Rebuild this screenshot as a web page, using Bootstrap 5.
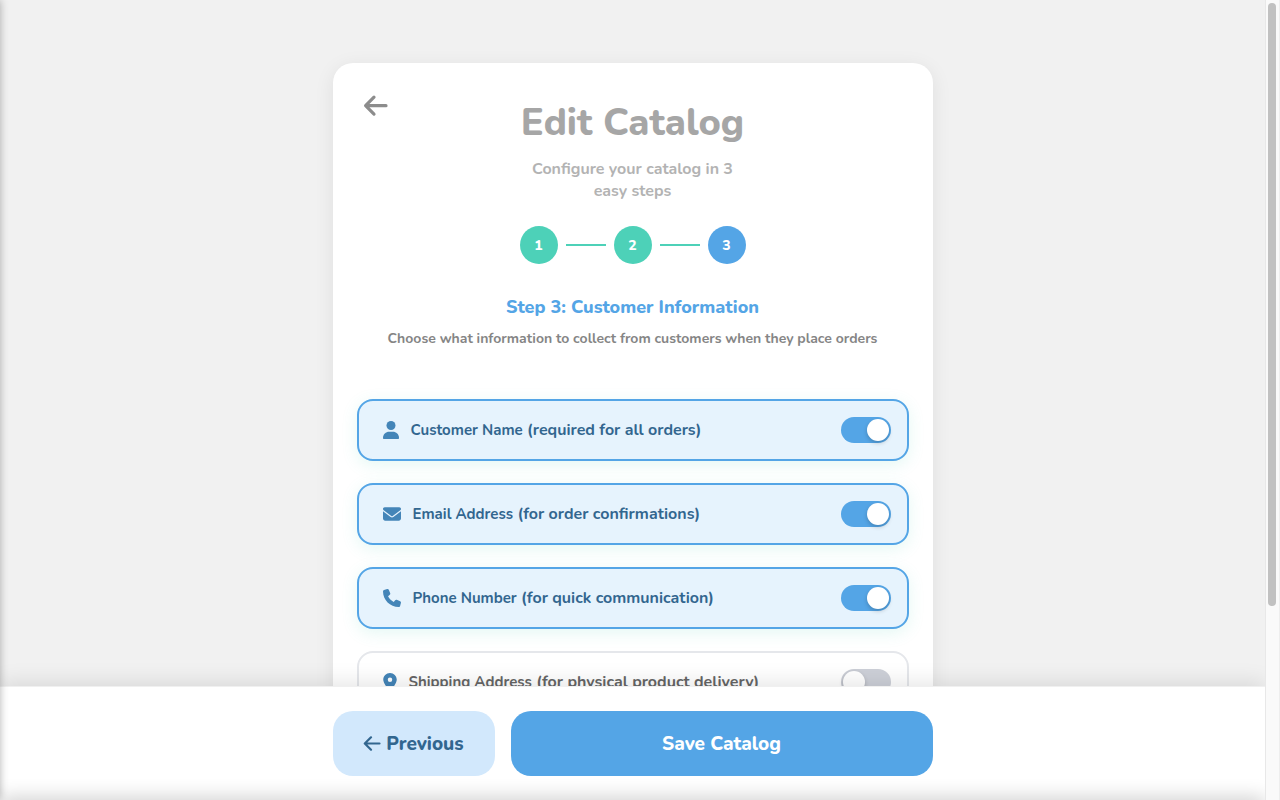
<!DOCTYPE html>
<html lang="en">
<head>
<meta charset="utf-8">
<meta name="viewport" content="width=device-width, initial-scale=1">
<title>Edit Catalog</title>
<link href="https://cdn.jsdelivr.net/npm/bootstrap@5.3.0/dist/css/bootstrap.min.css" rel="stylesheet">
<style>
  :root { --blue: #54a5e6; --navy: #32668f; --mint: #4dd1b8; }
  body { font-family: Nunito, Lato, "Open Sans", sans-serif; background: #f1f1f1; color: #777; }
  .scroll-area { min-height: 0; scrollbar-width: none; }
  .scroll-area::-webkit-scrollbar { display: none; }
  .column { max-width: 600px; }
  .panel { margin-top: 63px; padding: 40px 24px 48px; border-radius: 20px; background: #fff; box-shadow: 0 4px 20px rgba(0,0,0,.08); }
  .back { top: 28px; left: 28px; color: #8c8c8c; line-height: 0; }
  h1 { font-size: 38px; line-height: 40px; font-weight: 800; color: #a6a6a6; }
  .intro { max-width: 226px; margin-top: 15px; font-size: 16px; line-height: 22px; font-weight: 700; color: #b3b3b3; }
  .step { width: 38px; height: 38px; background: var(--mint); color: #fff; font-size: 14px; font-weight: 800; }
  .step.current { background: var(--blue); }
  .steps { margin-top: 24px; }
  .step-line { width: 40px; height: 2px; background: var(--mint); }
  h2 { margin-top: 32px; font-size: 18px; line-height: 22px; font-weight: 800; color: var(--blue); }
  .hint { margin-top: 10px; font-size: 14px; line-height: 22px; font-weight: 700; color: #858585; }
  .options { margin-top: 49px; gap: 22px; }
  .option { height: 62px; padding: 0 16px 0 24px; border: 2px solid #e5e7eb; border-radius: 16px; gap: 12px; color: #666; font-size: 16px; font-weight: 700; cursor: pointer; }
  .option:has(:checked) { border-color: var(--blue); background: #e6f3fd; color: var(--navy); box-shadow: 0 4px 16px rgba(77,209,184,.15); }
  .option svg { fill: #4485b8; flex: none; }
  .option-name { font-size: 15px; }
  .toggle { appearance: none; position: relative; flex: none; width: 50px; height: 26px; border-radius: 13px; background: #cdd0d8; cursor: pointer; }
  .toggle::before { content: ""; position: absolute; top: 2px; left: 2px; width: 22px; height: 22px; border-radius: 50%; background: #fff; box-shadow: 0 2px 4px rgba(0,0,0,.2); }
  .toggle:checked { background: var(--blue); }
  .toggle:checked::before { left: 26px; }
  .actions { z-index: 2; padding: 24px 0; border-top: 1px solid #f0f0f0; background: #fff; box-shadow: 0 -4px 20px rgba(0,0,0,.1); }
  .actions .btn { height: 65px; padding-top: 8px; border: 0; border-radius: 20px; font-size: 19px; font-weight: 800; }
  .btn-prev { width: 162px; background: #d2e8fc; color: var(--navy); gap: 5px; }
  .btn-save { background: var(--blue); color: #fff; }
  .edge { z-index: 3; pointer-events: none; }
  .edge-left { top: 0; bottom: 0; left: -10px; width: 10px; box-shadow: 0 0 8px rgba(0,0,0,.3); }
  .edge-bottom { bottom: -20px; left: 0; right: 15px; height: 20px; box-shadow: 0 -2px 20px rgba(0,0,0,.2); }
  .track { width: 15px; padding: 3px 3px 3px 2px; background: #fafafa; border-left: 1px solid #e8e8e8; border-right: 1px solid #eee; z-index: 4; }
  .thumb { width: 8px; height: 76%; background: #c1c1c1; border-radius: 4px; }
</style>
</head>
<body>
<div class="d-flex vh-100 overflow-hidden position-relative">
  <div class="d-flex flex-column flex-fill overflow-hidden">
    <main class="scroll-area flex-fill overflow-auto">
      <div class="panel column mx-auto position-relative text-center">
        <a href="#" class="back position-absolute" aria-label="Back">
          <svg width="30" height="30" viewBox="0 0 30 30" fill="none" stroke="currentColor" stroke-width="3.2" stroke-linecap="round" stroke-linejoin="round"><path d="M25 14.700H5M13 6.200 4.600 14.700l8.400 8.400"/></svg>
        </a>
        <h1 class="mb-0">Edit Catalog</h1>
        <p class="intro mx-auto mb-0">Configure your catalog in 3 easy steps</p>
        <div class="steps d-flex justify-content-center align-items-center gap-2">
          <div class="step rounded-circle d-flex justify-content-center align-items-center">1</div>
          <div class="step-line"></div>
          <div class="step rounded-circle d-flex justify-content-center align-items-center">2</div>
          <div class="step-line"></div>
          <div class="step current rounded-circle d-flex justify-content-center align-items-center">3</div>
        </div>
        <h2 class="mb-0">Step 3: Customer Information</h2>
        <p class="hint mb-0">Choose what information to collect from customers when they place orders</p>
        <div class="options d-flex flex-column text-start">
          <label class="option d-flex align-items-center" for="name">
            <svg width="16" height="18" viewBox="0 0 16 18"><circle cx="8" cy="4.500" r="4.500"/><path d="M0 17c0-3.700 2.800-6.200 6.200-6.200h3.600c3.400 0 6.200 2.500 6.200 6.200 0 .6-.4 1-1 1H1c-.6 0-1-.4-1-1z"/></svg>
            <span class="me-auto"><span class="option-name">Customer Name</span> (required for all orders)</span>
            <input class="toggle" type="checkbox" role="switch" id="name" checked>
          </label>
          <label class="option d-flex align-items-center" for="email">
            <svg width="18" height="18" viewBox="0 0 512 512"><path d="M48 64C21.500 64 0 85.500 0 112c0 15.100 7.100 29.300 19.200 38.400l217.600 163.200c11.400 8.500 27 8.500 38.400 0l217.600-163.200c12.100-9.100 19.200-23.300 19.200-38.400 0-26.500-21.500-48-48-48H48zM0 176v208c0 35.300 28.700 64 64 64h384c35.300 0 64-28.700 64-64V176L294.400 339.200c-22.800 17.100-54 17.100-76.800 0L0 176z"/></svg>
            <span class="me-auto"><span class="option-name">Email Address</span> (for order confirmations)</span>
            <input class="toggle" type="checkbox" role="switch" id="email" checked>
          </label>
          <label class="option d-flex align-items-center" for="phone">
            <svg width="18" height="18" viewBox="0 0 512 512"><path d="M164.900 24.600c-7.700-18.600-28-28.500-47.400-23.200l-88 24C12.100 30.200 0 46 0 64c0 247.400 200.600 448 448 448 18 0 33.800-12.100 38.600-29.500l24-88c5.300-19.400-4.600-39.700-23.200-47.400l-96-40c-16.300-6.800-35.200-2.100-46.300 11.600L304.700 368C234.300 334.700 177.300 277.700 144 207.300L193.300 167c13.700-11.200 18.400-30 11.600-46.300l-40-96z"/></svg>
            <span class="me-auto"><span class="option-name">Phone Number</span> (for quick communication)</span>
            <input class="toggle" type="checkbox" role="switch" id="phone" checked>
          </label>
          <label class="option d-flex align-items-center" for="address">
            <svg width="14" height="18" viewBox="0 0 384 512"><path d="M215.700 499.200C267 435 384 279.400 384 192 384 86 298 0 192 0S0 86 0 192c0 87.400 117 243 168.300 307.200 12.300 15.300 35.100 15.300 47.400 0zM192 128a64 64 0 1 1 0 128 64 64 0 1 1 0-128z"/></svg>
            <span class="me-auto"><span class="option-name">Shipping Address</span> (for physical product delivery)</span>
            <input class="toggle" type="checkbox" role="switch" id="address">
          </label>
        </div>
      </div>
    </main>
    <footer class="actions position-relative">
      <div class="column mx-auto d-flex gap-3">
        <button type="button" class="btn btn-prev d-flex justify-content-center align-items-center"><svg width="18" height="18" viewBox="0 0 18 18" fill="none" stroke="currentColor" stroke-width="2.200" stroke-linecap="round" stroke-linejoin="round"><path d="M16.500 7.500H2M8 1.300 1.800 7.500 8 13.700"/></svg>Previous</button>
        <button type="button" class="btn btn-save flex-fill">Save Catalog</button>
      </div>
    </footer>
  </div>
  <div class="track flex-shrink-0" aria-hidden="true"><div class="thumb"></div></div>
  <div class="edge edge-left position-absolute"></div>
  <div class="edge edge-bottom position-absolute"></div>
</div>
<script src="https://cdn.jsdelivr.net/npm/bootstrap@5.3.0/dist/js/bootstrap.bundle.min.js"></script>
</body>
</html>
